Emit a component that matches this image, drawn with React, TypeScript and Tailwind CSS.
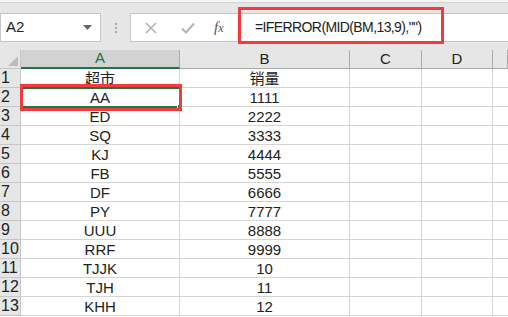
import React from "react";

const rows: [string, string][] = [
  ["超市", "销量"],
  ["AA", "1111"],
  ["ED", "2222"],
  ["SQ", "3333"],
  ["KJ", "4444"],
  ["FB", "5555"],
  ["DF", "6666"],
  ["PY", "7777"],
  ["UUU", "8888"],
  ["RRF", "9999"],
  ["TJJK", "10"],
  ["TJH", "11"],
  ["KHH", "12"],
];

const font = { fontFamily: '"Liberation Sans", Arial, "Noto Sans CJK SC", sans-serif' };

export default function App() {
  return (
    <div className="relative w-[508px] h-[317px] overflow-hidden bg-white text-[#222]" style={font}>
      {/* Toolbar */}
      <div className="h-[50px] bg-[#e6e6e6] border-t-[2px] border-[#f5f5f5]">
        <div className="h-px bg-[#d4d4d4]" />
        <div className="flex items-center pt-[10px]">
          <div className="w-[101px] h-[29px] bg-white border border-[#c6c6c6] flex items-center pl-[5px] pr-[8px]">
            <span className="text-[15px] flex-1">A2</span>
            <svg width="9" height="6" viewBox="0 0 9 6">
              <path d="M0 0h9L4.5 5z" fill="#666" />
            </svg>
          </div>
          <div className="w-[29px] flex flex-col items-center gap-[2px]">
            <span className="w-[2px] h-[2px] bg-[#a8a8a8]" />
            <span className="w-[2px] h-[2px] bg-[#a8a8a8]" />
            <span className="w-[2px] h-[2px] bg-[#a8a8a8]" />
          </div>
          <div className="w-[111px] h-[29px] bg-white border border-[#c6c6c6] flex items-center">
            <svg width="14" height="14" viewBox="0 0 14 14" className="ml-[13px]">
              <path d="M2 2l10 10M12 2L2 12" stroke="#b4b4b4" strokeWidth="1.6" />
            </svg>
            <svg width="16" height="14" viewBox="0 0 16 14" className="ml-[22px]">
              <path d="M2 7.5l4 4L14 2.5" stroke="#b4b4b4" strokeWidth="2" fill="none" />
            </svg>
            <span className="ml-[18px] text-[15px] italic text-[#555]" style={{ fontFamily: '"Liberation Serif", serif' }}>
              f<span className="text-[12px]">x</span>
            </span>
          </div>
          <div className="flex-1 h-[29px] bg-white border-y border-[#c6c6c6] flex items-center pl-[14px] text-[14px] tracking-[-0.6px]">
            =IFERROR(MID(BM,13,9),"")
          </div>
        </div>
      </div>

      {/* Sheet */}
      <div className="grid grid-cols-[21px_159px_170px_72px_71px_1fr]">
        <div className="h-[19px] bg-[#e6e6e6] border-r border-b border-[#c6c6c6] relative">
          <svg width="10" height="10" viewBox="0 0 10 10" className="absolute right-[2px] bottom-[2px]">
            <path d="M10 0v10H0z" fill="#bdbdbd" />
          </svg>
        </div>
        <div className="h-[19px] bg-[#d2d2d2] border-r border-[#ababab] border-b-2 border-b-[#217346] flex items-center justify-center text-[15px] text-[#217346]">
          A
        </div>
        {["B", "C", "D", ""].map((c, i) => (
          <div key={i} className="h-[19px] bg-[#e6e6e6] border-r border-[#ababab] border-b border-b-[#ababab] flex items-center justify-center text-[15px]">
            {c}
          </div>
        ))}
        {rows.map(([a, b], i) => (
          <React.Fragment key={i}>
            <div className="h-[19px] bg-[#e6e6e6] border-r border-b border-[#c6c6c6] flex items-center pl-[1px] text-[16px] leading-none">
              {i + 1}
            </div>
            <div className="h-[19px] border-r border-b border-[#d4d4d4] flex items-center justify-center text-[15px] leading-none">
              {a}
            </div>
            <div className="h-[19px] border-r border-b border-[#d4d4d4] flex items-center justify-center text-[15px] leading-none">
              {b}
            </div>
            <div className="h-[19px] border-r border-b border-[#d4d4d4]" />
            <div className="h-[19px] border-r border-b border-[#d4d4d4]" />
            <div className="h-[19px] border-b border-[#d4d4d4]" />
          </React.Fragment>
        ))}
      </div>

      {/* Selected cell A2 */}
      <div className="absolute left-[20px] top-[87px] w-[161px] h-[21px] border-2 border-[#217346]">
        <span className="absolute -right-[3px] -bottom-[3px] w-[5px] h-[5px] bg-[#217346] border border-white" />
      </div>

      {/* Annotations */}
      <div className="absolute left-[238px] top-[7px] w-[206px] h-[37px] border-[3px] border-[#f03c3c]" />
      <div className="absolute left-[20px] top-[84px] w-[162px] h-[27px] border-[3px] border-[#f03c3c]" />
    </div>
  );
}
